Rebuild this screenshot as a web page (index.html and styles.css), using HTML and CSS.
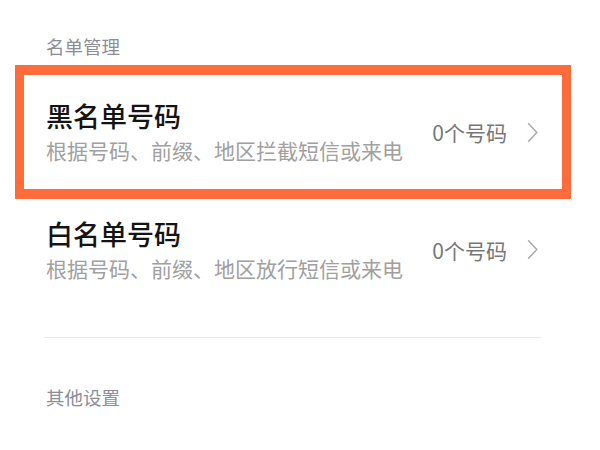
FILE: index.html
```html
<!DOCTYPE html>
<html lang="zh-CN">
<head>
<meta charset="utf-8">
<link rel="stylesheet" href="styles.css">
</head>
<body>
<div class="page">
  <div class="section-title first">名单管理</div>
  <div class="item highlight">
    <div class="text">
      <div class="title">黑名单号码</div>
      <div class="sub">根据号码、前缀、地区拦截短信或来电</div>
    </div>
    <div class="meta">
      <span class="count">0个号码</span>
      <svg class="chev" width="11" height="21" viewBox="0 0 11 21"><path d="M1.2 1.2 L9.8 10.5 L1.2 19.8" fill="none" stroke="#aaaaaa" stroke-width="1.5"/></svg>
    </div>
  </div>
  <div class="item">
    <div class="text">
      <div class="title">白名单号码</div>
      <div class="sub">根据号码、前缀、地区放行短信或来电</div>
    </div>
    <div class="meta">
      <span class="count">0个号码</span>
      <svg class="chev" width="11" height="21" viewBox="0 0 11 21"><path d="M1.2 1.2 L9.8 10.5 L1.2 19.8" fill="none" stroke="#aaaaaa" stroke-width="1.5"/></svg>
    </div>
  </div>
  <div class="divider"></div>
  <div class="section-title second">其他设置</div>
</div>
</body>
</html>
```
FILE: styles.css
```css
html, body {
  margin: 0;
  padding: 0;
  background: #ffffff;
}
.page {
  width: 600px;
  height: 450px;
  overflow: hidden;
  font-family: "Noto Sans CJK SC", "Noto Sans", sans-serif;
}
.section-title {
  font-size: 18.5px;
  line-height: 26px;
  color: #8d8d98;
  padding-left: 46px;
}
.section-title.first {
  padding-top: 33px;
  margin-bottom: 6px;
}
.section-title.second {
  margin-top: 46px;
}
.item {
  margin: 0 29px 0 15px;
  border-style: solid;
  border-color: transparent;
  border-width: 0 9px;
  padding: 0 24px 0 22px;
  height: 101px;
  display: flex;
  align-items: center;
  justify-content: space-between;
}
.item.highlight {
  border-color: #ff6b3b;
  border-width: 10px 9px;
  height: 114px;
}
.text {
  display: flex;
  flex-direction: column;
}
.title {
  font-size: 27px;
  line-height: 34px;
  font-weight: 500;
  color: #141414;
}
.sub {
  font-size: 21px;
  line-height: 30px;
  margin-top: 2px;
  color: #a0a0a0;
}
.meta {
  display: flex;
  align-items: center;
  gap: 20px;
}
.count {
  font-size: 21px;
  line-height: 28px;
  color: #777777;
}
.chev {
  display: block;
}
.divider {
  margin: 37px 58px 0 44px;
  height: 1px;
  background: #ececec;
}
```
